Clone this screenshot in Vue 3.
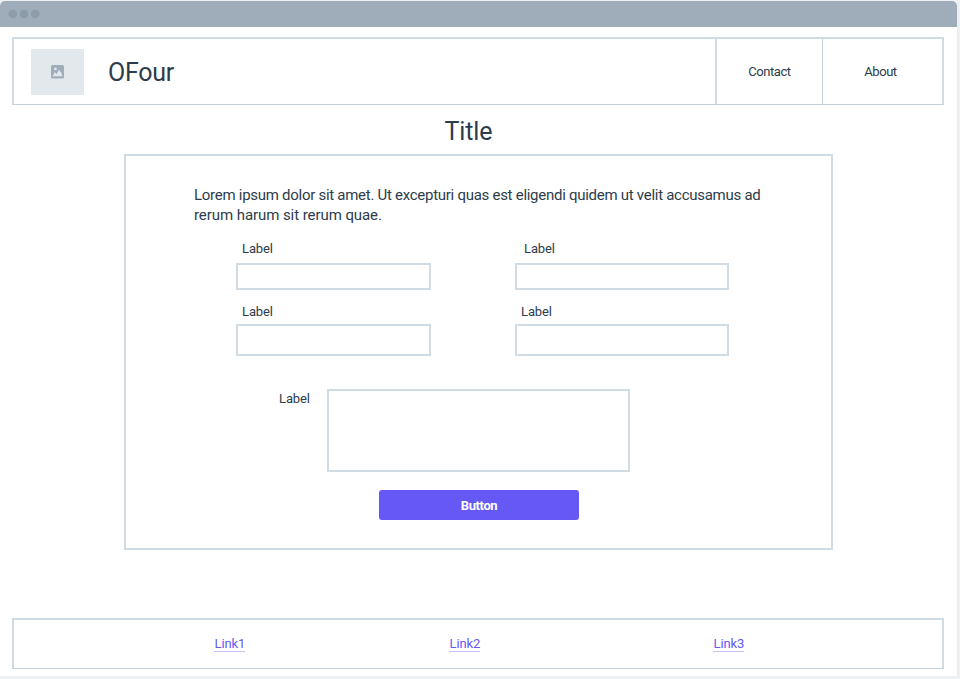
<script setup>
const navItems = ['Contact', 'About']
const fields = ['Label', 'Label', 'Label', 'Label']
const links = ['Link1', 'Link2', 'Link3']
</script>

<template>
  <div class="window">
    <div class="titlebar">
      <svg width="32" height="10" viewBox="0 0 32 10" fill="#8c9cab">
        <circle cx="4.8" cy="5" r="4.3" />
        <circle cx="16" cy="5" r="4.3" />
        <circle cx="27.3" cy="5" r="4.3" />
      </svg>
    </div>
    <header class="header">
      <div class="logo">
        <svg width="13" height="14" viewBox="0 0 13 14">
          <rect width="13" height="13.6" rx="1.6" fill="#9eadb9" />
          <circle cx="4.4" cy="3.9" r="1.4" fill="#e2e8ec" />
          <path d="M1.6 11.2 3.9 7 5.4 9.2 8.2 4.6 9.4 7.2 10 6.7 11.5 11.2Z" fill="#e2e8ec" />
        </svg>
      </div>
      <span class="brand">OFour</span>
      <nav class="nav">
        <a v-for="item in navItems" :key="item">{{ item }}</a>
      </nav>
    </header>
    <h1 class="title"><span>Title</span></h1>
    <main class="card">
      <p class="intro">
        <span class="line first">Lorem ipsum dolor sit amet. Ut excepturi quas est eligendi quidem ut velit accusamus ad</span>
        <span class="line">rerum harum sit rerum quae.</span>
      </p>
      <div class="fields">
        <label v-for="(field, i) in fields" :key="i" class="field">
          <span class="label">{{ field }}</span>
          <input type="text" />
        </label>
      </div>
      <label class="message">
        <span class="label">Label</span>
        <textarea></textarea>
      </label>
      <button class="submit"><span>Button</span></button>
    </main>
    <footer class="footer">
      <a v-for="link in links" :key="link">{{ link }}</a>
    </footer>
  </div>
</template>

<style>
body {
  background: #eef1f4;
}
</style>

<style scoped>
* {
  box-sizing: border-box;
}
.window {
  width: 957px;
  height: 675px;
  margin-top: 1px;
  display: flex;
  flex-direction: column;
  background: #fff;
  border-radius: 5px 5px 0 0;
  box-shadow: 0 1px 2px #dfe4e9;
  font-family: Roboto, "Liberation Sans", sans-serif;
  font-size: 13px;
  letter-spacing: -0.1px;
  color: #2d3c4b;
}
.titlebar {
  height: 26px;
  flex: none;
  display: flex;
  align-items: center;
  padding-left: 8px;
  background: #9eadb9;
  border-radius: 5px 5px 0 0;
}
.header {
  flex: none;
  display: flex;
  align-items: center;
  width: 932px;
  height: 68px;
  margin: 10px 0 0 12px;
  border: 2px solid #d1dbe4;
  border-bottom: 1px solid #c3d0db;
}
.logo {
  display: flex;
  align-items: center;
  justify-content: center;
  width: 53px;
  height: 46px;
  margin-left: 17px;
  background: #e2e8ec;
}
.brand {
  margin-left: 24px;
  padding-top: 1px;
  font-size: 25px;
  letter-spacing: -0.25px;
}
.nav {
  display: flex;
  align-self: stretch;
  margin-left: auto;
  letter-spacing: -0.45px;
}
.nav a {
  display: flex;
  align-items: center;
  justify-content: center;
  width: 107px;
  border-left: 2px solid #d1dbe4;
}
.nav a:last-child {
  width: 120px;
  border-left: 1px solid #c3d0db;
  padding-right: 4px;
}
.title {
  flex: none;
  height: 49px;
  margin: 0 0 0 -20px;
  font-size: 25px;
  line-height: 53px;
  font-weight: 400;
  letter-spacing: -0.1px;
  text-align: center;
}
.card {
  flex: none;
  display: flex;
  flex-direction: column;
  width: 709px;
  height: 396px;
  margin-left: 124px;
  border: 2px solid #d1dbe4;
}
.intro {
  margin: 29px 0 0 68px;
  font-size: 15px;
  line-height: 20px;
  letter-spacing: -0.07px;
  white-space: nowrap;
}
.line {
  display: block;
}
.line.first {
  letter-spacing: -0.275px;
}
.fields {
  display: grid;
  grid-template-columns: 195px 214px;
  grid-template-rows: 61px 71px;
  column-gap: 84px;
  margin: 12px 0 0 110px;
}
.field {
  display: flex;
  flex-direction: column;
}
.label {
  height: 26px;
  line-height: 24px;
  padding-left: 6px;
}
.field:nth-child(2) .label {
  padding-left: 9px;
}
.field:nth-child(n + 3) .label {
  line-height: 28px;
}
input,
textarea {
  display: block;
  flex: none;
  width: 100%;
  height: 27px;
  margin: 0;
  padding: 0 6px;
  border: 2px solid #d1dbe4;
  border-radius: 0;
  background: #fff;
  resize: none;
}
.field:nth-child(n + 3) input {
  height: 32px;
}
.message {
  display: flex;
  margin: 20px 0 0 153px;
}
.message .label {
  width: 48px;
  padding: 0;
  line-height: 19px;
}
.message textarea {
  width: 303px;
  height: 83px;
}
.submit {
  width: 200px;
  height: 30px;
  margin: 18px 0 0 253px;
  padding: 0;
  border: 0;
  border-radius: 3px;
  background: #6558f5;
  color: #fff;
  font: 700 13px Roboto, sans-serif;
  letter-spacing: -0.4px;
}
.footer {
  flex: none;
  display: flex;
  align-items: center;
  width: 932px;
  height: 51px;
  margin: 68px 0 0 12px;
  padding: 0 0 0 200px;
  border: 2px solid #d1dbe4;
  border-bottom: 1px solid #c3d0db;
}
.footer a {
  width: 31px;
  height: 16px;
  padding-left: 0.5px;
  line-height: 15px;
  white-space: nowrap;
  color: #6558f5;
  border-bottom: 1px solid #c5bffb;
}
.footer a:nth-child(2) {
  margin-left: 204px;
}
.footer a:nth-child(3) {
  margin-left: 233px;
}
</style>
